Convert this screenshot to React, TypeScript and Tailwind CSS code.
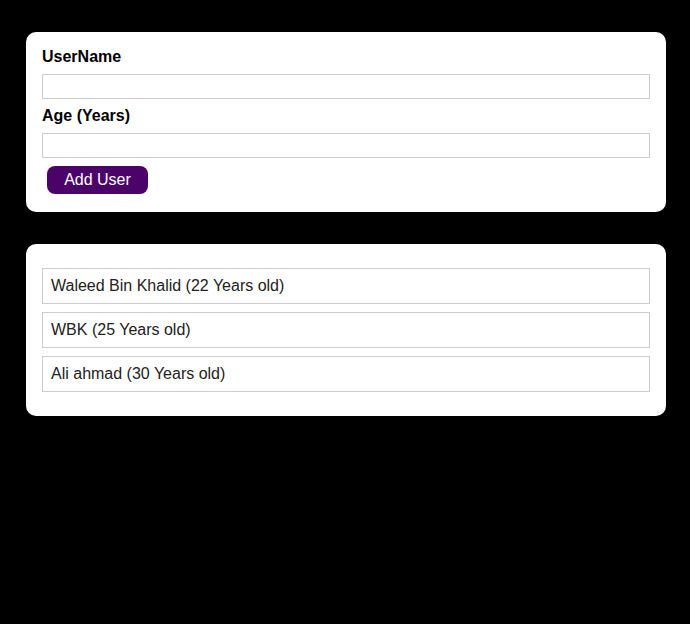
const users = [
  { name: 'Waleed Bin Khalid', age: 22 },
  { name: 'WBK', age: 25 },
  { name: 'Ali ahmad', age: 30 },
];

export default function App() {
  return (
    <div className="min-h-[624px] w-full bg-black pt-8 px-[26px] font-['Liberation_Sans',Arial,sans-serif]">
      {/* Form */}
      <div className="w-[640px] rounded-[10px] bg-white px-4 pt-4 pb-[18px]">
        <label className="block text-[16px] font-bold leading-[18px] text-black mb-2">UserName</label>
        <input type="text" className="block w-full h-[25px] border border-[#ccc] mb-2 outline-none" />
        <label className="block text-[16px] font-bold leading-[18px] text-black mb-2">Age (Years)</label>
        <input type="number" className="block w-full h-[25px] border border-[#ccc] mb-2 outline-none" />
        <button className="ml-[5px] h-[28px] w-[101px] rounded-[8px] bg-[#4b0369] text-[16px] text-white">
          Add User
        </button>
      </div>

      {/* List */}
      <div className="mt-8 w-[640px] rounded-[10px] bg-white px-4 py-6">
        <ul className="flex flex-col gap-2">
          {users.map((u) => (
            <li
              key={u.name}
              className="h-[36px] border border-[#ccc] px-2 flex items-center text-[16px] text-[#222]"
            >
              {u.name} ({u.age} Years old)
            </li>
          ))}
        </ul>
      </div>
    </div>
  );
}
